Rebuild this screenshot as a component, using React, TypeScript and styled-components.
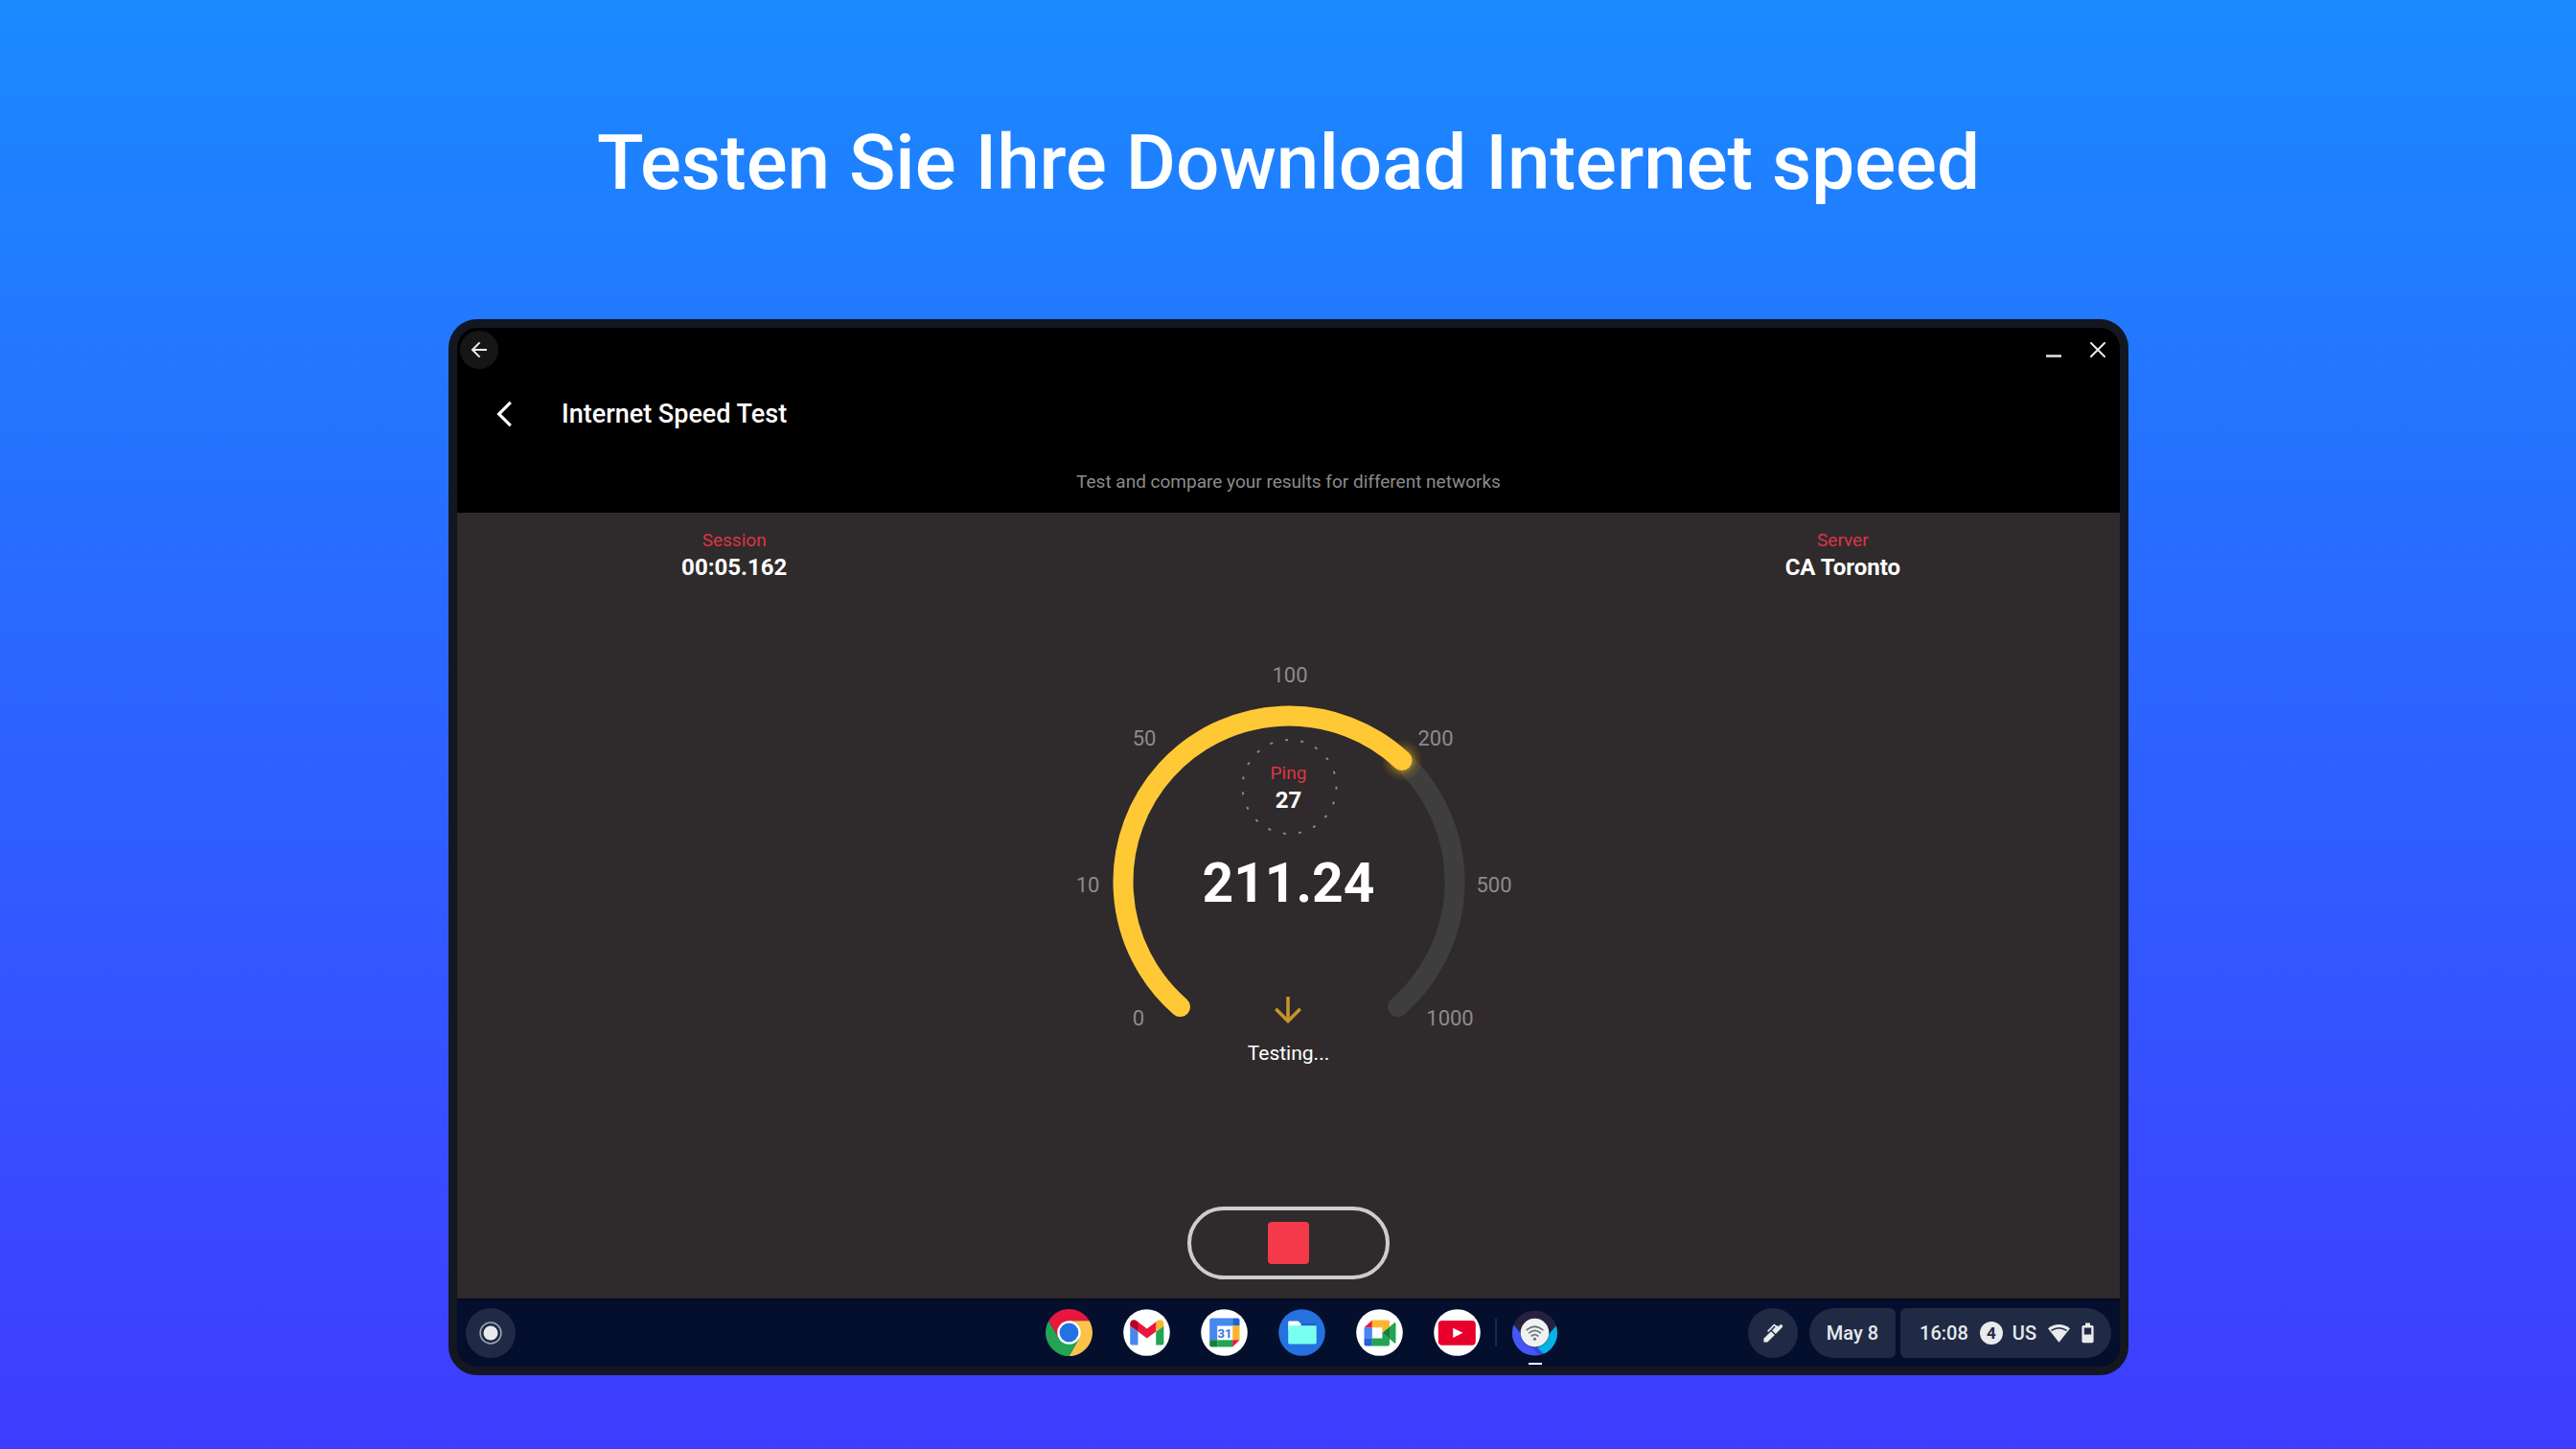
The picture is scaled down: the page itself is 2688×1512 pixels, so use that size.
import React from "react";
import styled, { createGlobalStyle, css } from "styled-components";

const GlobalStyle = createGlobalStyle`
  *, *::before, *::after { box-sizing: border-box; }
  body {
    margin: 0;
    font-family: Roboto, "Liberation Sans", sans-serif;
    color: #ffffff;
  }
  button { font: inherit; color: inherit; padding: 0; border: 0; background: none; cursor: pointer; }
  svg { display: block; }
  h1, h2, p, dl, dt, dd { margin: 0; }
`;

const colors = {
  accent: "#dc3545",
  amber: "#ffc935",
  muted: "#8b8b8b",
  surface: "#2f2a2b",
  track: "#3e3e3e",
  bezel: "#131722",
  shelf: "#040f2e",
  pill: "#202a45",
  shelfText: "#e8eaed",
};

const Page = styled.main`
  min-height: 100vh;
  display: flex;
  flex-direction: column;
  align-items: center;
  padding: 120px 24px 77px 25px;
  background: linear-gradient(180deg, #1a8aff 0%, #3f3cff 100%);
`;

const Headline = styled.h1`
  font-size: 80px;
  line-height: 100px;
  font-weight: 500;
  text-align: center;
`;

const Device = styled.section`
  display: flex;
  flex-direction: column;
  width: 100%;
  max-width: 1753px;
  margin-top: 113px;
  border: 9px solid ${colors.bezel};
  border-radius: 30px;
  overflow: hidden;
  background: #000000;
`;

const TitleBar = styled.div`
  display: flex;
  align-items: center;
  justify-content: space-between;
  height: 46px;
  padding: 0 3px;
`;

const RoundButton = styled.button`
  display: grid;
  place-items: center;
  width: 40px;
  height: 40px;
  border-radius: 50%;
  background: #161616;
`;

const WindowControls = styled.div`
  display: flex;
  gap: 6px;
`;

const WindowButton = styled.button`
  display: grid;
  place-items: center;
  width: 40px;
  height: 40px;
`;

const AppBar = styled.header`
  display: flex;
  align-items: center;
  gap: 44px;
  height: 88px;
  padding: 0 33px;
`;

const BackButton = styled.button`
  display: grid;
  place-items: center;
  width: 32px;
  height: 40px;
`;

const AppTitle = styled.h2`
  font-size: 27px;
  line-height: 32px;
  font-weight: 500;
`;

const Subtitle = styled.p`
  padding-bottom: 5px;
  font-size: 19px;
  line-height: 54px;
  text-align: center;
  color: ${colors.muted};
`;

const Stage = styled.div`
  display: flex;
  flex-direction: column;
  align-items: center;
  padding: 15px 0 20px;
  background: ${colors.surface};
`;

const Facts = styled.dl`
  display: grid;
  grid-template-columns: repeat(3, 1fr);
  width: 100%;
`;

const Fact = styled.div<{ $column: number }>`
  grid-column: ${(p) => p.$column};
  text-align: center;
`;

const FactLabel = styled.dt`
  font-size: 19px;
  line-height: 28px;
  color: ${colors.accent};
`;

const FactValue = styled.dd`
  font-size: 24px;
  line-height: 28px;
  font-weight: 700;
`;

const Gauge = styled.div`
  display: grid;
  justify-items: center;
  margin-top: 74px;
  & > * { grid-area: 1 / 1; }
`;

const TickText = styled.text`
  font-size: 22px;
  text-anchor: middle;
  dominant-baseline: central;
  fill: ${colors.muted};
`;

const Readout = styled.div`
  display: flex;
  flex-direction: column;
  align-items: center;
  padding-top: 91px;
`;

const Ping = styled.dl`
  display: flex;
  flex-direction: column;
  justify-content: center;
  height: 100px;
  text-align: center;
`;

const Speed = styled.output`
  margin-top: 15px;
  font-size: 57px;
  line-height: 72px;
  font-weight: 700;
`;

const Direction = styled.div`
  margin-top: 75px;
`;

const Status = styled.p`
  margin-top: 10px;
  font-size: 21px;
  line-height: 28px;
`;

const StopButton = styled.button`
  display: grid;
  place-items: center;
  width: 211px;
  height: 76px;
  margin-top: 139px;
  border: 4px solid #cdcdcd;
  border-radius: 38px;
`;

const StopGlyph = styled.span`
  width: 43px;
  height: 44px;
  border-radius: 4px;
  background: #f3394a;
`;

const Shelf = styled.footer`
  display: grid;
  grid-template-columns: 1fr auto 1fr;
  align-items: center;
  height: 71px;
  padding: 0 9px;
  border-top: 1px solid #02050f;
  background: ${colors.shelf};
  color: ${colors.shelfText};
`;

const ShelfButton = styled.button`
  display: grid;
  place-items: center;
  width: 52px;
  height: 52px;
  border-radius: 50%;
  background: ${colors.pill};
`;

const Apps = styled.nav`
  display: flex;
  align-items: center;
  gap: 32px;
  padding: 0 0 2px 27px;
`;

const AppButton = styled.button<{ $running?: boolean }>`
  position: relative;
  width: 49px;
  height: 49px;
  border-radius: 50%;
  ${(p) =>
    p.$running &&
    css`
      &::after {
        content: "";
        position: absolute;
        left: 18px;
        bottom: -9px;
        width: 14px;
        height: 2px;
        background: #ffffff;
      }
    `}
`;

const Separator = styled.span`
  width: 2px;
  height: 29px;
  margin: 0 -17px;
  background: #1f2943;
`;

const Tray = styled.div`
  display: flex;
  justify-content: flex-end;
`;

const TrayPill = styled.button<{ $side: "start" | "end" }>`
  display: flex;
  align-items: center;
  gap: 12px;
  height: 52px;
  margin-left: ${(p) => (p.$side === "start" ? "12px" : "5px")};
  padding: ${(p) => (p.$side === "start" ? "0 18px" : "0 18px 0 20px")};
  border-radius: ${(p) => (p.$side === "start" ? "26px 6px 6px 26px" : "6px 26px 26px 6px")};
  background: ${colors.pill};
  font-size: 20px;
  line-height: 24px;
  font-weight: 500;
`;

const Region = styled.span`
  display: flex;
  align-items: center;
  gap: 10px;
`;

const Count = styled.span`
  width: 24px;
  height: 24px;
  border-radius: 50%;
  background: ${colors.shelfText};
  color: ${colors.pill};
  font-size: 17px;
  line-height: 24px;
  font-weight: 700;
  text-align: center;
`;

const CX = 240;
const CY = 240;
const RADIUS = 173;

const polar = (deg: number, r: number) => {
  const a = (deg * Math.PI) / 180;
  return [CX + r * Math.sin(a), CY - r * Math.cos(a)];
};

const arc = (from: number, to: number) => {
  const [x1, y1] = polar(from, RADIUS);
  const [x2, y2] = polar(to, RADIUS);
  return `M${x1} ${y1}A${RADIUS} ${RADIUS} 0 ${to - from > 180 ? 1 : 0} 1 ${x2} ${y2}`;
};

const START = -139;
const END = 139;
const NOW = 43;

const ticks = [
  { label: "0", x: 83, y: 382 },
  { label: "10", x: 30, y: 243 },
  { label: "50", x: 89, y: 90 },
  { label: "100", x: 241, y: 24 },
  { label: "200", x: 393, y: 90 },
  { label: "500", x: 454, y: 243 },
  { label: "1000", x: 408, y: 382 },
];

const GaugeDial = () => {
  const [tipX, tipY] = polar(NOW, RADIUS);
  return (
    <svg width="480" height="440" viewBox="0 0 480 440" overflow="visible">
      <defs>
        <radialGradient id="glow">
          <stop offset="0.4" stopColor="#ffc935" stopOpacity="0.5" />
          <stop offset="0.7" stopColor="#d9a400" stopOpacity="0.18" />
          <stop offset="1" stopColor="#d9a400" stopOpacity="0" />
        </radialGradient>
      </defs>
      <g fill="none" strokeWidth="21" strokeLinecap="round">
        <path d={arc(START, END)} stroke={colors.track} />
        <circle cx={tipX} cy={tipY} r="22" fill="url(#glow)" />
        <path d={arc(START, NOW)} stroke={colors.amber} />
      </g>
      {Array.from({ length: 19 }, (_, i) => {
        const deg = (i * 360) / 19 - 3.4;
        return (
          <rect
            key={i}
            x="239"
            y="91"
            width="3"
            height="2"
            fill="#8a8687"
            transform={`rotate(${deg} 240.5 141)`}
          />
        );
      })}
      {ticks.map((t) => (
        <TickText key={t.label} x={t.x} y={t.y}>
          {t.label}
        </TickText>
      ))}
    </svg>
  );
};

const ChromeIcon = () => (
  <svg width="49" height="49" viewBox="0 0 48 48">
    <path fill="#e9173d" d="M3.22 12A24 24 0 0 1 44.78 12H24L13.6 30Z" />
    <path fill="#fbc34b" d="M44.78 12A24 24 0 0 1 24 48L34.4 30 24 12Z" />
    <path fill="#23a455" d="M24 48A24 24 0 0 1 3.22 12L13.6 30H34.4Z" />
    <circle cx="24" cy="24" r="12" fill="#fff" />
    <circle cx="24" cy="24" r="9.7" fill="#2372e2" />
  </svg>
);

const GmailIcon = () => (
  <svg width="49" height="49" viewBox="0 0 49 49">
    <circle cx="24.5" cy="24.5" r="24.3" fill="#fff" />
    <path fill="#4787f0" d="M7.2 17.5 15.5 23.5V37.4H9.2a2 2 0 0 1-2-2Z" />
    <path fill="#23a455" d="M42.4 17.5 34.2 23.5V37.4h6.2a2 2 0 0 0 2-2Z" />
    <path fill="#e9173d" d="M14.2 12.6 24.8 20.6 35.4 12.6 34.2 23.6 24.8 30.6 15.5 23.6Z" />
    <path fill="#b80024" d="M7.2 15.4C7.2 11.6 11.4 10 14.2 12.4L15.5 13.5V23.6L7.2 17.6Z" />
    <path fill="#fbb62f" d="M42.4 15.4C42.4 11.6 38.2 10 35.4 12.4L34.2 13.5V23.6L42.4 17.6Z" />
  </svg>
);

const CalendarDay = styled.text`
  font-size: 13px;
  font-weight: 700;
  text-anchor: middle;
  fill: #2f74e0;
`;

const CalendarIcon = () => (
  <svg width="49" height="49" viewBox="0 0 49 49">
    <circle cx="24.5" cy="24.5" r="24.3" fill="#fff" />
    <path fill="#4787f0" d="M11.2 9.5H33.2V17.5H17.2V32.3H9.2V11.5a2 2 0 0 1 2-2Z" />
    <path fill="#1f63cf" d="M33.2 9.5h5.3a2 2 0 0 1 2 2v6H33.2Z" />
    <path fill="#fbb62f" d="M33.2 17.5H40.5V32.3H33.2Z" />
    <path fill="#23a455" d="M17.2 32.3H33.2V39.5H17.2Z" />
    <path fill="#128040" d="M9.2 32.3h8v7.2h-6a2 2 0 0 1-2-2Z" />
    <path fill="#e9173d" d="M33.2 32.3h7.3L33.2 39.5Z" />
    <CalendarDay x="25" y="29.6">31</CalendarDay>
  </svg>
);

const FilesIcon = () => (
  <svg width="49" height="49" viewBox="0 0 49 49">
    <circle cx="24.5" cy="24.5" r="24.3" fill="#2571df" />
    <path fill="#fff" d="M11.4 12.5H20.6L24.4 16.2H38.3V22H10.2V13.7a1.2 1.2 0 0 1 1.2-1.2Z" />
    <path fill="#1e62cc" d="M24.2 15h14a1.5 1.5 0 0 1 1.5 1.5V18H23Z" />
    <path fill="#79fff2" d="M10.2 17.3H39.7V35a1.6 1.6 0 0 1-1.6 1.6H11.8A1.6 1.6 0 0 1 10.2 35Z" />
  </svg>
);

const MeetIcon = () => (
  <svg width="49" height="49" viewBox="0 0 49 49">
    <circle cx="24.5" cy="24.5" r="24.3" fill="#fff" />
    <path fill="#e9173d" d="M16.8 11.5V19.2H8.5Z" />
    <path fill="#4787f0" d="M8.5 19.2h8.3V30.6H8.5Z" />
    <path fill="#1f63cf" d="M8.5 30.6h8.3v7.9H10.5a2 2 0 0 1-2-2Z" />
    <path fill="#fbb62f" d="M16.8 11.5H33a2 2 0 0 1 2 2V18.5L27.4 24.8V19.2H16.8Z" />
    <path fill="#23a455" d="M16.8 30.6H27.4V24.8L35 31.2v5.3a2 2 0 0 1-2 2H16.8Z" />
    <path fill="#23a455" d="M35 18.4 39.8 14.4Q41.5 13.2 41.5 15.2V34.4Q41.5 36.4 39.8 35.2L35 31.2Z" />
    <path fill="#128040" d="M27.4 24.8 35 18.4V31.2Z" />
  </svg>
);

const YoutubeIcon = () => (
  <svg width="49" height="49" viewBox="0 0 49 49">
    <circle cx="24.5" cy="24.5" r="24.3" fill="#fff" />
    <rect x="4.8" y="12" width="39" height="25.7" rx="4" fill="#e8002d" />
    <path fill="#fff" d="M20.2 19.7 30.5 24.8 20.2 29.9Z" />
  </svg>
);

const SpeedAppIcon = () => (
  <svg width="49" height="49" viewBox="0 0 49 49">
    <defs>
      <clipPath id="disc">
        <circle cx="24.5" cy="25" r="23.6" />
      </clipPath>
    </defs>
    <g clipPath="url(#disc)">
      <path fill="#26213f" d="M0 0H49V49H0Z" />
      <path fill="#4556f6" d="M0 14.5 2.5 16.5 12 28 34 49H0Z" />
      <path fill="#3a45d4" d="M20 38 28 40 34 46 30 49Z" />
      <path fill="#05b2e6" d="M49 15 27 40 36 49H49Z" />
    </g>
    <circle cx="24.5" cy="25.2" r="15.2" fill="#131a33" opacity="0.35" />
    <circle cx="24.5" cy="24.6" r="14.8" fill="#f1f1f2" />
    <g fill="none" stroke="#66747b" strokeWidth="1.7" strokeLinecap="round">
      <path d="M16.2 21.6Q24.5 14.9 32.8 21.6" />
      <path d="M18.7 24.8Q24.5 20.1 30.3 24.8" />
      <path d="M21.2 28Q24.5 25.3 27.8 28" />
    </g>
    <circle cx="24.5" cy="31.2" r="1.6" fill="#66747b" />
  </svg>
);

const apps = [
  { name: "Chrome", Icon: ChromeIcon },
  { name: "Gmail", Icon: GmailIcon },
  { name: "Calendar", Icon: CalendarIcon },
  { name: "Files", Icon: FilesIcon },
  { name: "Meet", Icon: MeetIcon },
  { name: "YouTube", Icon: YoutubeIcon },
];

const StylusIcon = () => (
  <svg width="24" height="24" viewBox="0 0 24 24" fill={colors.shelfText}>
    <path d="M2.4 21.6V17.8L10 10.2 13.9 14.1 6.4 21.6Z" />
    <path d="M11 9.2 16.2 4l1.6 1.2 1.5-1.6a1.4 1.4 0 0 1 2 0l.5.5a1.4 1.4 0 0 1 0 2L14.9 13.1Z" />
    <path fill="none" stroke={colors.shelfText} strokeWidth="1.5" d="M6.6 10.4 13.3 3.6 15.6 5.4" />
  </svg>
);

const WifiIcon = () => (
  <svg width="23" height="19" viewBox="0 0 23 19">
    <path fill={colors.shelfText} d="M0 4.2Q11.5 -4 23 4.2L11.5 18.8Z" />
    <path fill="none" stroke={colors.pill} strokeWidth="1.5" d="M3.4 6.4Q11.5 1 19.6 6.4" />
  </svg>
);

const BatteryIcon = () => (
  <svg width="13" height="22" viewBox="0 0 13 22">
    <path
      fill={colors.shelfText}
      fillRule="evenodd"
      d="M4 0.5H9V3H11A1.6 1.6 0 0 1 12.6 4.6V19.6A1.6 1.6 0 0 1 11 21.2H2A1.6 1.6 0 0 1 0.4 19.6V4.6A1.6 1.6 0 0 1 2 3H4ZM2.8 5.4V12.4H10.2V5.4Z"
    />
  </svg>
);

export default function App() {
  return (
    <>
      <GlobalStyle />
      <Page>
        <Headline>Testen Sie Ihre Download Internet speed</Headline>
        <Device>
          <TitleBar>
            <RoundButton aria-label="Back">
              <svg width="18" height="18" viewBox="0 0 18 18" fill="none" stroke="#eeeeee" strokeWidth="2">
                <path d="M17 9H2.4M9.6 1.4 2 9l7.6 7.6" />
              </svg>
            </RoundButton>
            <WindowControls>
              <WindowButton aria-label="Minimize">
                <svg width="16" height="16" viewBox="0 0 16 16">
                  <path d="M0 14.5H16" stroke="#e3e6e5" strokeWidth="2.4" />
                </svg>
              </WindowButton>
              <WindowButton aria-label="Close">
                <svg width="16" height="16" viewBox="0 0 16 16">
                  <path d="M1 1 15 15M15 1 1 15" stroke="#e8eaed" strokeWidth="2" strokeLinecap="round" />
                </svg>
              </WindowButton>
            </WindowControls>
          </TitleBar>
          <AppBar>
            <BackButton aria-label="Navigate up">
              <svg width="24" height="28" viewBox="0 0 24 28" fill="none" stroke="#ffffff" strokeWidth="3.2">
                <path d="M18.8 1.8 6.6 14l12.2 12.2" />
              </svg>
            </BackButton>
            <AppTitle>Internet Speed Test</AppTitle>
          </AppBar>
          <Subtitle>Test and compare your results for different networks</Subtitle>
          <Stage>
            <Facts>
              <Fact $column={1}>
                <FactLabel>Session</FactLabel>
                <FactValue>00:05.162</FactValue>
              </Fact>
              <Fact $column={3}>
                <FactLabel>Server</FactLabel>
                <FactValue>CA Toronto</FactValue>
              </Fact>
            </Facts>
            <Gauge>
              <GaugeDial />
              <Readout>
                <Ping>
                  <FactLabel>Ping</FactLabel>
                  <FactValue>27</FactValue>
                </Ping>
                <Speed>211.24</Speed>
                <Direction>
                  <svg width="42" height="42" viewBox="0 0 24 24" fill="#c8952b">
                    <path d="M20 12l-1.41-1.41L13 16.17V4h-2v12.17l-5.58-5.59L4 12l8 8 8-8z" />
                  </svg>
                </Direction>
                <Status>Testing...</Status>
              </Readout>
            </Gauge>
            <StopButton aria-label="Stop">
              <StopGlyph />
            </StopButton>
          </Stage>
          <Shelf>
            <ShelfButton aria-label="Launcher">
              <svg width="24" height="24" viewBox="0 0 24 24">
                <circle cx="12" cy="12" r="10.9" fill="none" stroke="#a3a8b5" strokeWidth="1.5" />
                <circle cx="12" cy="12" r="7.5" fill="#e8eaed" />
              </svg>
            </ShelfButton>
            <Apps>
              {apps.map(({ name, Icon }) => (
                <AppButton key={name} aria-label={name}>
                  <Icon />
                </AppButton>
              ))}
              <Separator />
              <AppButton $running aria-label="Internet Speed Test">
                <SpeedAppIcon />
              </AppButton>
            </Apps>
            <Tray>
              <ShelfButton aria-label="Stylus tools">
                <StylusIcon />
              </ShelfButton>
              <TrayPill $side="start">May 8</TrayPill>
              <TrayPill $side="end">
                <span>16:08</span>
                <Region>
                  <Count>4</Count>
                  <span>US</span>
                </Region>
                <WifiIcon />
                <BatteryIcon />
              </TrayPill>
            </Tray>
          </Shelf>
        </Device>
      </Page>
    </>
  );
}
